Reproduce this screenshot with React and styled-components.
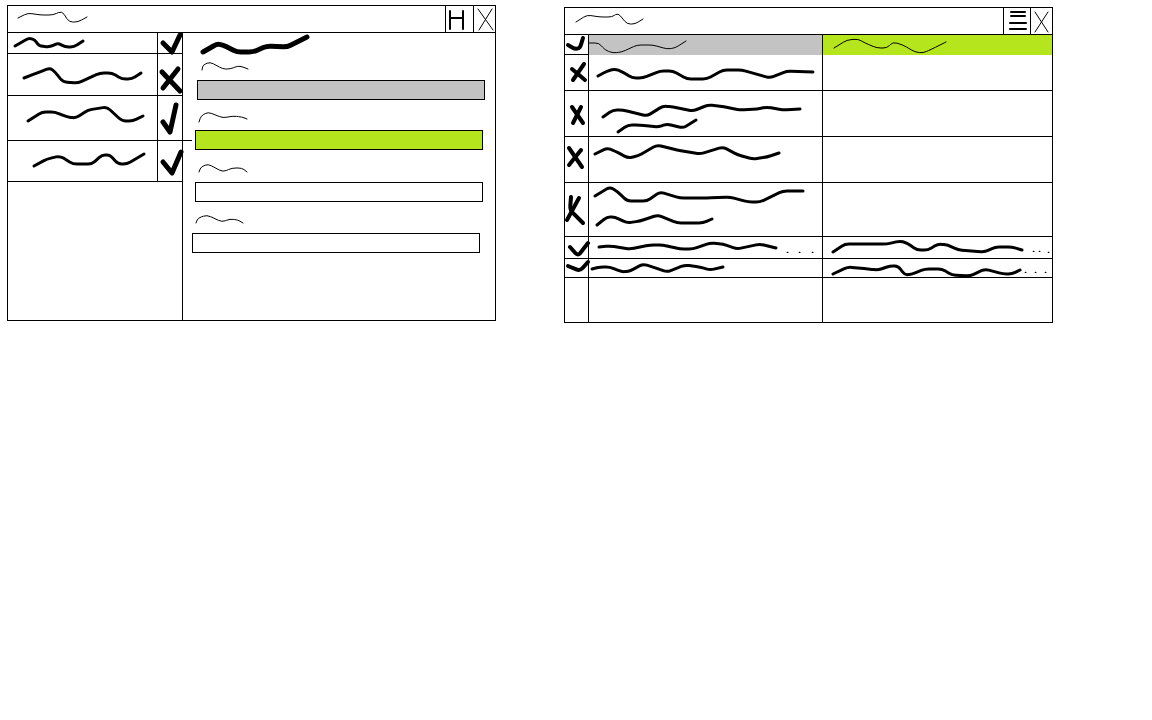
import styled, { createGlobalStyle } from 'styled-components'

const GlobalStyle = createGlobalStyle`
  html, body {
    margin: 0;
    background: #fff;
  }
`

const Page = styled.div`
  display: flex;
  align-items: flex-start;
  gap: 68px;
  padding: 5px 0 0 7px;
`
const Frame = styled.section`
  box-sizing: border-box;
  width: 489px;
  height: 316px;
  margin-top: ${p => p.$top || 0}px;
  border: 1px solid #000;
  display: flex;
  flex-direction: column;
`
const TitleBar = styled.header`
  box-sizing: border-box;
  height: 27px;
  flex: none;
  display: flex;
  border-bottom: 1px solid #000;
`
const Overlay = styled.div`
  display: grid;
  justify-items: start;
  align-items: start;
`
const TitleText = styled(Overlay)`
  flex: 1;
`
const TitleButton = styled(Overlay)`
  box-sizing: border-box;
  width: ${p => p.$width}px;
  border-left: 1px solid #000;
`
const ScribbleSvg = styled.svg`
  grid-area: 1 / 1;
  display: block;
  margin-left: ${p => p.$left}px;
  margin-top: ${p => p.$top}px;
  fill: none;
  stroke: #000;
  stroke-linecap: round;
  stroke-linejoin: round;
`

const Split = styled.div`
  flex: 1;
  display: flex;
  min-height: 0;
`
const ListPane = styled.div`
  box-sizing: border-box;
  width: 175px;
  flex: none;
  border-right: 1px solid #000;
`
const ListRow = styled.div`
  box-sizing: border-box;
  height: ${p => p.$height}px;
  display: grid;
  grid-template-columns: 150px 24px;
  border-bottom: 1px solid #000;
`
const ListText = styled(Overlay)`
  border-right: 1px solid #000;
`
const FormPane = styled.div`
  flex: 1;
  display: flex;
  flex-direction: column;
  align-items: flex-start;
`
const LabelArea = styled(Overlay)`
  height: ${p => p.$height}px;
  flex: none;
`
const Field = styled.div`
  position: relative;
  box-sizing: border-box;
  width: 288px;
  height: 20px;
  flex: none;
  margin-left: ${p => p.$indent}px;
  border: 1px solid #000;
  background: ${p => p.$fill || '#fff'};
  ${p => p.$tick && `
    &::before {
      content: '';
      position: absolute;
      left: -13px;
      top: 9px;
      width: 9px;
      height: 1px;
      background: #000;
    }
  `}
`

const TableRow = styled.div`
  box-sizing: border-box;
  height: ${p => p.$height}px;
  flex: none;
  display: grid;
  grid-template-columns: 24px 234px 1fr;
  border-bottom: ${p => (p.$last ? 'none' : '1px solid #000')};
`
const TableCell = styled(Overlay)`
  border-right: ${p => (p.$end ? 'none' : '1px solid #000')};
  background: ${p => p.$fill || 'transparent'};
`

const toPoints = text => text.split(' ').map(pair => pair.split(',').map(Number))

// straight runs with the corners rounded off, the way a mouse drawn line looks
const toPath = (points, sharp) => {
  if (sharp || points.length < 3) {
    return points.map((p, i) => `${i ? 'L' : 'M'}${p[0]} ${p[1]}`).join(' ')
  }
  const near = (from, to) => {
    const dx = to[0] - from[0]
    const dy = to[1] - from[1]
    const cut = Math.min(0.4, 4 / Math.hypot(dx, dy))
    return [from[0] + dx * cut, from[1] + dy * cut]
  }
  let d = `M${points[0][0]} ${points[0][1]}`
  for (let i = 1; i < points.length - 1; i++) {
    const a = near(points[i], points[i - 1])
    const b = near(points[i], points[i + 1])
    d += ` L${a[0]} ${a[1]} Q${points[i][0]} ${points[i][1]} ${b[0]} ${b[1]}`
  }
  const last = points[points.length - 1]
  return `${d} L${last[0]} ${last[1]}`
}

// lines are written in page pixels, "at" is the top left corner of the cell they sit in
const Scribble = ({ lines, at, weight = 3, sharp = false }) => {
  const parsed = lines.map(toPoints)
  const all = parsed.flat()
  const pad = weight + 1
  const x0 = Math.min(...all.map(p => p[0])) - pad
  const y0 = Math.min(...all.map(p => p[1])) - pad
  const w = Math.max(...all.map(p => p[0])) + pad - x0
  const h = Math.max(...all.map(p => p[1])) + pad - y0
  return (
    <ScribbleSvg
      $left={x0 - at[0]}
      $top={y0 - at[1]}
      width={w}
      height={h}
      viewBox={`${x0} ${y0} ${w} ${h}`}
      strokeWidth={weight}
    >
      {parsed.map((points, i) => (
        <path key={i} d={toPath(points, sharp)} />
      ))}
    </ScribbleSvg>
  )
}

const Dots = ({ at, spots }) => (
  <Scribble at={at} weight={1.4} lines={spots.map(([x, y]) => `${x},${y} ${x + 0.4},${y}`)} />
)

const listRows = [
  {
    height: 21,
    top: 33,
    text: '15,46 29,38 35,40 39,46 50,47 58,43 65,47 74,47 83,41',
    mark: ['163,43 172,52 180,35'],
  },
  {
    height: 42,
    top: 54,
    text: '24,78 37,73 50,68 55,72 63,82 78,83 100,73 112,73 122,79 132,79 141,73',
    mark: ['162,72 180,91', '178,69 163,88'],
  },
  {
    height: 45,
    top: 96,
    text: '28,121 42,112 55,112 67,117 76,118 88,110 107,107 122,121 133,121 143,116',
    mark: ['163,122 170,132 176,105'],
  },
  {
    height: 41,
    top: 141,
    text: '34,166 47,159 60,156 73,164 92,164 102,155 110,155 118,164 127,164 144,154',
    mark: ['163,162 172,173 181,152'],
  },
]

const tableRows = [
  { height: 36, top: 55, mark: ['572,69 585,80', '584,64 573,80'], text: ['598,76 607,71 615,69 623,72 632,78 643,78 660,71 673,71 687,79 707,79 723,70 742,70 770,78 787,71 813,72'] },
  {
    height: 46,
    top: 91,
    mark: ['572,107 583,123', '581,107 573,123'],
    text: [
      '603,117 613,110 623,110 647,116 663,106 673,107 693,111 708,105 720,106 740,110 757,109 767,107 783,110 800,109',
      '618,132 628,125 640,125 658,127 667,124 683,128 696,120',
    ],
  },
  { height: 46, top: 137, mark: ['569,148 582,167', '581,150 569,165'], text: ['595,154 607,148 615,151 628,158 638,156 657,145 677,150 700,154 723,147 738,155 753,159 767,157 779,153'] },
  {
    height: 54,
    top: 183,
    mark: ['571,197 570,210 583,223', '579,198 567,220'],
    text: [
      '595,196 610,187 618,192 627,201 647,201 660,192 680,198 707,198 730,197 748,202 760,202 783,191 803,191',
      '597,225 607,217 615,217 627,223 640,221 658,215 677,223 703,223 712,219',
    ],
  },
  {
    height: 22,
    top: 237,
    mark: ['570,247 578,256 588,243'],
    text: ['599,247 610,246 630,249 650,245 663,245 680,249 693,249 710,243 723,244 737,249 760,244 776,248'],
    dots: [[787, 252], [799, 252], [812, 252]],
    detail: '833,252 845,244 887,244 900,241 907,243 917,250 928,250 938,244 948,245 958,250 985,252 995,247 1012,247 1022,250',
    detailDots: [[1033, 251], [1039, 251], [1048, 252]],
  },
  {
    height: 19,
    top: 259,
    mark: ['568,266 580,271 588,262'],
    text: ['592,269 600,267 610,267 622,272 630,271 643,264 653,267 667,272 685,265 700,267 710,270 723,267'],
    detail: '833,274 848,267 868,269 878,270 890,266 898,266 905,275 912,274 925,269 942,269 952,275 970,276 985,269 1003,274 1012,274 1020,270',
    detailDots: [[1025, 272], [1035, 272], [1045, 272]],
  },
]

const MARK_X = 565
const TEXT_X = 589
const DETAIL_X = 823

const App = () => (
  <>
    <GlobalStyle />
    <Page>
      <Frame>
        <TitleBar>
          <TitleText>
            <Scribble at={[8, 6]} weight={1} lines={['18,18 28,13 40,15 53,15 62,11 69,22 78,22 87,17']} />
          </TitleText>
          <TitleButton $width={28}>
            <Scribble at={[446, 6]} weight={2} sharp lines={['450,11 450,29', '463,11 463,29', '450,18 463,18']} />
          </TitleButton>
          <TitleButton $width={22}>
            <Scribble at={[474, 6]} weight={1} sharp lines={['478,9 493,30', '492,9 479,30']} />
          </TitleButton>
        </TitleBar>
        <Split>
          <ListPane>
            {listRows.map(row => (
              <ListRow key={row.top} $height={row.height}>
                <ListText>
                  <Scribble at={[8, row.top]} lines={[row.text]} />
                </ListText>
                <Overlay>
                  <Scribble at={[158, row.top]} weight={5} sharp lines={row.mark} />
                </Overlay>
              </ListRow>
            ))}
          </ListPane>
          <FormPane>
            <LabelArea $height={47}>
              <Scribble at={[183, 33]} weight={5} lines={['203,52 217,44 223,45 237,52 253,52 267,46 287,47 307,37']} />
              <Scribble at={[183, 33]} weight={1} lines={['202,70 203,65 210,62 223,69 230,69 238,66 243,67 248,69']} />
            </LabelArea>
            <Field $indent={14} $fill='#c3c3c3' />
            <LabelArea $height={30}>
              <Scribble at={[183, 100]} weight={1} lines={['199,122 201,116 208,112 223,118 233,116 242,117 247,119']} />
            </LabelArea>
            <Field $indent={12} $fill='#b5e61d' $tick />
            <LabelArea $height={32}>
              <Scribble at={[183, 150]} weight={1} lines={['199,172 201,167 208,164 223,172 232,168 242,168 247,172']} />
            </LabelArea>
            <Field $indent={12} />
            <LabelArea $height={31}>
              <Scribble at={[183, 202]} weight={1} lines={['196,223 198,218 207,215 222,222 230,219 238,220 243,223']} />
            </LabelArea>
            <Field $indent={9} />
          </FormPane>
        </Split>
      </Frame>

      <Frame $top={2}>
        <TitleBar>
          <TitleText>
            <Scribble at={[565, 8]} weight={1} lines={['576,22 587,15 600,17 612,17 618,13 627,24 635,24 643,19']} />
          </TitleText>
          <TitleButton $width={27}>
            <Scribble
              at={[1004, 8]}
              weight={2}
              sharp
              lines={['1011,12 1025,12', '1011,16 1025,16', '1010,23 1026,23', '1010,29 1026,29']}
            />
          </TitleButton>
          <TitleButton $width={22}>
            <Scribble at={[1031, 8]} weight={1} sharp lines={['1035,12 1048,32', '1048,12 1035,32']} />
          </TitleButton>
        </TitleBar>
        <TableRow $height={20}>
          <TableCell>
            <Scribble at={[MARK_X, 35]} weight={4} lines={['568,45 575,49 580,48 583,38']} />
          </TableCell>
          <TableCell $fill='#c3c3c3'>
            <Scribble at={[TEXT_X, 35]} weight={1} lines={['589,43 599,43 605,50 613,53 622,52 637,45 653,45 667,49 675,48 686,41']} />
          </TableCell>
          <TableCell $end $fill='#b5e61d'>
            <Scribble at={[DETAIL_X, 35]} weight={1} lines={['834,48 847,40 858,39 865,43 877,48 887,48 893,42 903,45 915,52 923,53 932,49 946,42']} />
          </TableCell>
        </TableRow>
        {tableRows.map(row => (
          <TableRow key={row.top} $height={row.height}>
            <TableCell>
              <Scribble at={[MARK_X, row.top]} weight={4} lines={row.mark} />
            </TableCell>
            <TableCell>
              <Scribble at={[TEXT_X, row.top]} lines={row.text} />
              {row.dots && <Dots at={[TEXT_X, row.top]} spots={row.dots} />}
            </TableCell>
            <TableCell $end>
              {row.detail && <Scribble at={[DETAIL_X, row.top]} lines={[row.detail]} />}
              {row.detailDots && <Dots at={[DETAIL_X, row.top]} spots={row.detailDots} />}
            </TableCell>
          </TableRow>
        ))}
        <TableRow $height={44} $last>
          <TableCell />
          <TableCell />
          <TableCell $end />
        </TableRow>
      </Frame>
    </Page>
  </>
)

export default App
